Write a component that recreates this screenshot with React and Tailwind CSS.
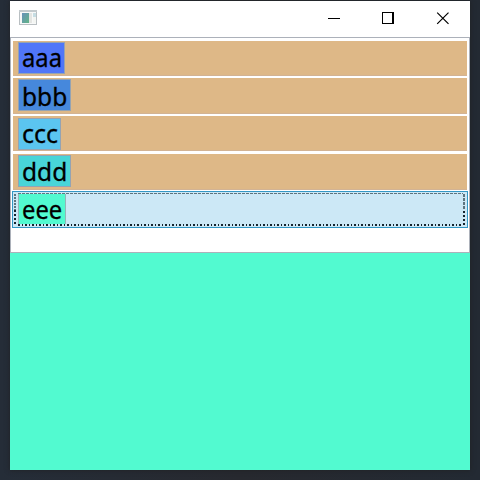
const rows = [
  { text: "aaa", box: "w-[47px] bg-[#5076f8]", row: "h-[35px] pt-px mb-[2px]", type: "scale-x-[0.95] leading-[29px]" },
  { text: "bbb", box: "w-[53px] bg-[#4688dc]", row: "h-[36px] pt-px mb-[2px]", type: "scale-x-[0.98] leading-[32px]" },
  { text: "ccc", box: "w-[43px] bg-[#5bc5f0]", row: "h-[35px] pt-[2px] mb-[3px]", type: "leading-[29px]" },
  { text: "ddd", box: "w-[53px] bg-[#48d5d8]", row: "h-[36px] pt-px mb-px", type: "scale-x-[0.98] leading-[31px]" },
];

function Label({ text, box, type }) {
  return (
    <div className={`h-[32px] shrink-0 border border-[#94a3b3] pl-[3px] ${box}`}>
      <span className={`block w-max origin-left text-[25px] text-black [-webkit-text-stroke:0.3px_#000] ${type}`}>{text}</span>
    </div>
  );
}

function TitleBar() {
  return (
    <div className="flex h-9 shrink-0 items-start bg-white pl-[9px]">
      <svg className="mt-[9px] shrink-0" width="19" height="16" viewBox="0 0 19 16" shapeRendering="crispEdges">
        <defs>
          <linearGradient id="pane" x1="0" y1="0" x2="1" y2="1">
            <stop offset="0" stopColor="#6791ba" />
            <stop offset="1" stopColor="#62b487" />
          </linearGradient>
        </defs>
        <rect x="0.5" y="0.5" width="17" height="14" fill="#f7f8f8" stroke="#b9bfc2" />
        <rect x="0" y="0" width="18" height="2" fill="#c3cacd" />
        <rect x="3" y="3" width="7" height="10" fill="url(#pane)" />
        <rect x="10" y="3" width="3" height="10" fill="#e4e5e2" />
        <rect x="14" y="3" width="3" height="4" fill="#c6dde3" />
        <rect x="14" y="7" width="3" height="6" fill="#f3f5f2" />
      </svg>
      <svg className="ml-auto mr-[21px] mt-[11px]" width="121" height="13" viewBox="0 0 121 13" fill="none" stroke="#000">
        <path d="M0 6.5h12" />
        <path d="M54.5 .5h10v11h-10z" shapeRendering="crispEdges" />
        <path d="M65.5 0v12" stroke="#000" />
        <path d="M109.2 .6l11.3 11.3M120.5 .6l-11.3 11.3" strokeWidth="1.2" />
      </svg>
    </div>
  );
}

export default function App() {
  return (
    <div className="h-[480px] w-[480px] overflow-hidden bg-gradient-to-r from-[#252d38] via-[#27292f] to-[#232a33] px-[10px] pt-px font-['Noto_Sans','Open_Sans',sans-serif]">
      <div className="flex h-[469px] flex-col bg-[#52fad0] shadow-[0_0_5px_#202124]">
        <TitleBar />
        <div className="h-[216px] shrink-0 border border-[#acb1ba] bg-white px-[2px] pt-[3px]">
          <div className="flex flex-col">
            {rows.map((row) => (
              <div key={row.text} className={`flex border-b border-[#d2b394] bg-[#deb887] pl-[5px] ${row.row}`}>
                <Label text={row.text} box={row.box} type={row.type} />
              </div>
            ))}
          </div>
          <div className="-mx-px flex h-[37px] border border-[#3397c5] bg-[#cce8f6] p-px">
            <svg className="h-[33px] w-[4px] shrink-0" viewBox="0 0 4 33" shapeRendering="crispEdges">
              <path d="M1 1v16" stroke="#5d747f" strokeWidth="2" strokeDasharray="2 1" />
              <path d="M1 17v16" stroke="#14232d" strokeWidth="2" strokeDasharray="2 2" />
            </svg>
            <div className="flex flex-1 flex-col">
              <svg className="h-px w-full shrink-0" shapeRendering="crispEdges">
                <path d="M0 .5h500" stroke="#5d747f" strokeDasharray="3 1" />
              </svg>
              <div className="h-[30px] w-[48px] shrink-0 border-x border-[#94b5b8] bg-[#52fad0] pl-[3px]">
                <span className="block w-max origin-left scale-x-[0.95] text-[25px] leading-[30px] text-black [-webkit-text-stroke:0.3px_#000]">eee</span>
              </div>
              <svg className="h-[2px] w-full shrink-0" shapeRendering="crispEdges">
                <path d="M0 1h500" stroke="#14232d" strokeWidth="2" strokeDasharray="2 2 1 2 2 2 1 2" />
              </svg>
            </div>
            <svg className="h-[33px] w-[3px] shrink-0" viewBox="0 0 3 33" shapeRendering="crispEdges">
              <path d="M1 1v16" stroke="#5d747f" strokeWidth="2" strokeDasharray="3 1" />
              <path d="M1 18v15" stroke="#14232d" strokeWidth="2" strokeDasharray="2 2" />
            </svg>
          </div>
        </div>
      </div>
    </div>
  );
}
